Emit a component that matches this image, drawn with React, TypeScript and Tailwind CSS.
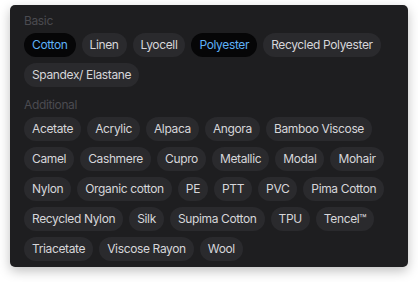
import { useState } from "react";

const BASIC = ["Cotton", "Linen", "Lyocell", "Polyester", "Recycled Polyester", "Spandex/ Elastane"];

const ADDITIONAL = [
  "Acetate",
  "Acrylic",
  "Alpaca",
  "Angora",
  "Bamboo Viscose",
  "Camel",
  "Cashmere",
  "Cupro",
  "Metallic",
  "Modal",
  "Mohair",
  "Nylon",
  "Organic cotton",
  "PE",
  "PTT",
  "PVC",
  "Pima Cotton",
  "Recycled Nylon",
  "Silk",
  "Supima Cotton",
  "TPU",
  "Tencel™",
  "Triacetate",
  "Viscose Rayon",
  "Wool",
];

function Chip({ label, active, onClick }: { label: string; active: boolean; onClick: () => void }) {
  return (
    <button
      onClick={onClick}
      className={
        active
          ? "h-6 px-2 rounded-full text-[12px] leading-4 tracking-[-0.03em] bg-[#060607] text-[#5eb1f7]"
          : "h-6 px-2 rounded-full text-[12px] leading-4 tracking-[-0.03em] bg-[#2a2a2d] text-[#d6d6da] hover:bg-[#333337]"
      }
    >
      {label}
    </button>
  );
}

function Group({
  title,
  items,
  selected,
  toggle,
}: {
  title: string;
  items: string[];
  selected: string[];
  toggle: (m: string) => void;
}) {
  return (
    <div>
      <div className="h-4 mb-1 text-[12px] leading-4 tracking-[-0.03em] text-[#4b4b50]">{title}</div>
      <div className="flex flex-wrap gap-1.5">
        {items.map((m) => (
          <Chip key={m} label={m} active={selected.includes(m)} onClick={() => toggle(m)} />
        ))}
      </div>
    </div>
  );
}

export default function App() {
  const [selected, setSelected] = useState<string[]>(["Cotton", "Polyester"]);

  const toggle = (m: string) =>
    setSelected((s) => (s.includes(m) ? s.filter((x) => x !== m) : [...s, m]));

  return (
    <div className="min-h-screen bg-white pt-[5px] pl-[10px]" style={{ fontFamily: "Inter, 'Noto Sans', sans-serif" }}>
      <div className="w-[398px] rounded-[5px] bg-[#1e1e20] px-3.5 pt-2 pb-1.5 shadow-[0_4px_12px_rgba(0,0,0,0.25)] flex flex-col gap-2.5">
        <Group title="Basic" items={BASIC} selected={selected} toggle={toggle} />
        <Group title="Additional" items={ADDITIONAL} selected={selected} toggle={toggle} />
      </div>
    </div>
  );
}
